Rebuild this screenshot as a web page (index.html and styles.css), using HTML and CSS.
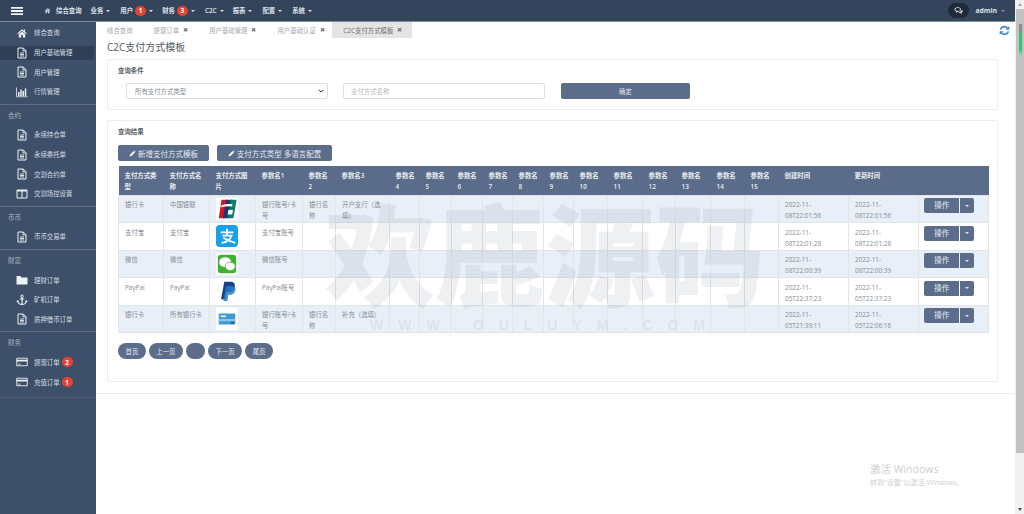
FILE: index.html
```html
<!DOCTYPE html>
<html lang="zh-CN">
<head>
<meta charset="utf-8">
<title>C2C支付方式模板</title>
<link rel="stylesheet" href="styles.css">
</head>
<body>
<svg class="defs" width="0" height="0" aria-hidden="true">
  <symbol id="i-home" viewBox="-2 -2 28 28"><path d="M12 3 0.8 13l1.700 2L12 6.800 21.500 15l1.700-2-4-3.600V4h-3v3z"/><path d="M4.500 15v7.500H10V16h4v6.500h5.500V15L12 8.600z"/></symbol>
  <symbol id="i-file" viewBox="0 0 24 24"><path d="M4 2h10.500L20 7.500V22H4z" fill="none" stroke="currentColor" stroke-width="2"/><path d="M14 2v6h6M8 12h8M8 15h8M8 18h8" fill="none" stroke="currentColor" stroke-width="1.800"/></symbol>
  <symbol id="i-chart" viewBox="0 0 24 24"><path d="M1 3v18.500h22" fill="none" stroke="currentColor" stroke-width="1.600"/><path d="M4 12h3v8H4zM8.500 7h3v13h-3zM13 10h3v10h-3zM17.500 5h3v15h-3z"/></symbol>
  <symbol id="i-cols" viewBox="0 0 24 24"><path d="M2 4h20v16H2zM12 4v16" fill="none" stroke="currentColor" stroke-width="2"/><path d="M2 4h20v3H2z"/></symbol>
  <symbol id="i-folder" viewBox="0 0 24 24"><path d="M1 4h8l2 3h12v14H1z"/></symbol>
  <symbol id="i-anchor" viewBox="0 0 24 24"><circle cx="12" cy="4.500" r="2.500" fill="none" stroke="currentColor" stroke-width="2"/><path d="M12 7v15M7.500 10h9M3.500 14c0 4.500 4.500 7 8.500 7s8.500-2.500 8.500-7" fill="none" stroke="currentColor" stroke-width="2.400"/><path d="M0.500 15.500 3.500 12l3 3.500zM17.500 15.500l3-3.500 3 3.500z"/></symbol>
  <symbol id="i-card" viewBox="0 0 24 24"><path d="M1.500 4.500h21v15h-21z" fill="none" stroke="currentColor" stroke-width="1.800"/><path d="M1.500 7.500h21v3.500h-21zM4 15.500h5v1.500H4z"/></symbol>
  <symbol id="i-pencil" viewBox="0 0 24 24"><path d="M2 22l1.500-6.500L15.500 3.500l5 5L8.500 20.500zM17 2l1.500-1 5 5-1 1.500z"/></symbol>
  <symbol id="i-chat" viewBox="0 0 24 24"><path d="M10 3c5 0 8.500 2.600 8.500 6s-3.500 6-8.500 6l-5 3 1-3.800C3.200 13.200 1.500 11.300 1.500 9 1.500 5.600 5 3 10 3zm0 2C6 5 3.500 6.800 3.500 9c0 1.500 1.200 2.900 3.200 3.700l-.4 1.500 2.500-1.300c.5.100 1.100.100 1.700.100 4 0 6.500-1.800 6.500-4S14 5 10 5z"/><path d="M21 9.500c1.200 1 2 2.300 2 3.800 0 1.800-1.200 3.300-3 4.200l1 3.500-4.600-2.800c-2 0-3.600-.4-4.900-1.200 5 .2 9.700-2.700 9.500-7.500z"/></symbol>
  <symbol id="i-refresh" viewBox="0 0 24 24"><path d="M3.500 10C4.500 6 8 3.500 12 3.500c2.700 0 5 1.100 6.600 2.900" fill="none" stroke="currentColor" stroke-width="3.400"/><path d="M22.500 2v8.500H14z"/><path d="M20.500 14c-1 4-4.500 6.500-8.500 6.500-2.700 0-5-1.100-6.600-2.900" fill="none" stroke="currentColor" stroke-width="3.400"/><path d="M1.500 22v-8.500H10z"/></symbol>
  <symbol id="p-union" viewBox="0 0 24 24"><rect width="24" height="24" fill="#fff"/><path d="M6 2h7L9.500 22H3z" fill="#d7141f"/><path d="M11 2h7l-3.500 20h-7z" fill="#163a74"/><path d="M16 2h6.500L19 22h-6.500z" fill="#0c7c6b"/><path d="M6 8c4-1.500 9-1.800 12-1.200l-.4 2.400c-3.500-.6-7.500-.2-12 1zM13.500 13h5l-.8 5h-5z" fill="#fff"/></symbol>
  <symbol id="p-ali" viewBox="0 0 24 24"><rect width="24" height="24" rx="4" fill="#1a9fe8"/><path d="M5 8h14M12 4v8M7 11.500h10c-1.500 4.500-5 7.500-11 8M8 14c3 2 7 4 13 5.500" fill="none" stroke="#fff" stroke-width="2"/></symbol>
  <symbol id="p-wx" viewBox="0 0 24 24"><rect width="24" height="24" fill="#fff"/><rect x="2" y="2" width="20" height="20" rx="3.500" fill="#41b035"/><ellipse cx="10" cy="10" rx="6.500" ry="5.500" fill="#fff"/><ellipse cx="15.500" cy="14.500" rx="5.500" ry="4.500" fill="#fff" stroke="#41b035" stroke-width=".8"/></symbol>
  <symbol id="p-pp" viewBox="0 0 24 24"><path d="M9 2h6.500c3.800 0 5.500 2 5 5.200-.6 4-3.300 6-7 6H11L9.800 21H5.500z" fill="#1b3f8f"/><path d="M11 6.500h6.500c2.800 0 4.100 1.500 3.700 4.200-.6 3.500-2.800 5.500-6 5.500h-1.700L12.300 23H8z" fill="#1e7cc4" opacity=".85"/></symbol>
  <symbol id="p-bank" viewBox="0 0 24 24"><rect width="24" height="24" rx="2" fill="#fff"/><rect x="3" y="6" width="18" height="12" rx="1" fill="#3d9ad9"/><path d="M3 12h18v2.500H3z" fill="#8bc6ec"/><path d="M5 8h6v2H5z" fill="#f0e9a0"/><path d="M16 15h4v2h-4z" fill="#1b5d96"/></symbol>
</svg>

<div class="app">
  <div class="main">
    <header class="topbar">
      <svg class="burger" viewBox="0 0 12 8" aria-hidden="true"><path d="M0 0h12v1.800H0zM0 3.100h12v1.800H0zM0 6.200h12V8H0z"/></svg>
      <nav class="topnav">
        <a class="tn tn-home"><svg class="ic-xs"><use href="#i-home"/></svg>综合查询</a>
        <a class="tn tn-a">业务<i class="caret"></i></a>
        <a class="tn tn-b">用户<b class="badge">1</b><i class="caret"></i></a>
        <a class="tn tn-b2">财务<b class="badge">3</b><i class="caret"></i></a>
        <a class="tn tn-c">C2C<i class="caret"></i></a>
        <a class="tn tn-d">报表<i class="caret"></i></a>
        <a class="tn tn-d">配置<i class="caret"></i></a>
        <a class="tn tn-d">系统<i class="caret"></i></a>
      </nav>
      <div class="topright">
        <span class="chat"><svg class="ic-chat"><use href="#i-chat"/></svg></span>
        <span class="admin">admin</span><i class="caret caret-dim"></i>
      </div>
    </header>
    <div class="body">
      <aside class="sidebar">
        <section class="sec sec-first">
          <a class="item"><svg class="ic"><use href="#i-home"/></svg>综合查询</a>
          <a class="item active"><svg class="ic"><use href="#i-file"/></svg>用户基础管理</a>
          <a class="item"><svg class="ic"><use href="#i-file"/></svg>用户管理</a>
          <a class="item"><svg class="ic"><use href="#i-chart"/></svg>行情管理</a>
        </section>
        <section class="sec">
          <h4>合约</h4>
          <a class="item"><svg class="ic"><use href="#i-file"/></svg>永续持仓单</a>
          <a class="item"><svg class="ic"><use href="#i-file"/></svg>永续委托单</a>
          <a class="item"><svg class="ic"><use href="#i-file"/></svg>交割合约单</a>
          <a class="item"><svg class="ic"><use href="#i-cols"/></svg>交割场控设置</a>
        </section>
        <section class="sec">
          <h4>币币</h4>
          <a class="item"><svg class="ic"><use href="#i-file"/></svg>币币交易单</a>
        </section>
        <section class="sec">
          <h4>财富</h4>
          <a class="item"><svg class="ic"><use href="#i-folder"/></svg>理财订单</a>
          <a class="item"><svg class="ic"><use href="#i-anchor"/></svg>矿机订单</a>
          <a class="item"><svg class="ic"><use href="#i-file"/></svg>质押借币订单</a>
        </section>
        <section class="sec">
          <h4>财务</h4>
          <a class="item"><svg class="ic"><use href="#i-card"/></svg>提现订单<b class="badge badge-side">2</b></a>
          <a class="item"><svg class="ic"><use href="#i-card"/></svg>充值订单<b class="badge badge-side">1</b></a>
        </section>
      </aside>
      <main class="content">
        <div class="tabs">
          <span class="tab tab-first">综合查询</span>
          <span class="tab">提现订单<b class="x">✖</b></span>
          <span class="tab">用户基础管理<b class="x">✖</b></span>
          <span class="tab">用户基础认证<b class="x">✖</b></span>
          <span class="tab tab-on">C2C支付方式模板<b class="x">✖</b></span>
          <svg class="refresh"><use href="#i-refresh"/></svg>
        </div>
        <div class="pad">
          <h1>C2C支付方式模板</h1>
          <div class="card card-q">
            <h5>查询条件</h5>
            <div class="form">
              <div class="select">所有支付方式类型<svg class="chev" viewBox="0 0 8 5" aria-hidden="true"><path d="M1 1l3 3 3-3" fill="none" stroke="#333" stroke-width="1.300"/></svg></div>
              <div class="input">支付方式名称</div>
              <button class="btn btn-ok">确定</button>
            </div>
          </div>
          <div class="card card-r">
            <h5>查询结果</h5>
            <div class="actions">
              <button class="btn btn-add"><svg class="ic-pen"><use href="#i-pencil"/></svg>新增支付方式模板</button>
              <button class="btn btn-lang"><svg class="ic-pen"><use href="#i-pencil"/></svg>支付方式类型 多语言配置</button>
            </div>
            <table class="grid">
              <colgroup>
                <col class="c45"><col class="c46"><col class="c46"><col class="c47"><col class="c33"><col class="c54"><col class="c30"><col class="c32"><col class="c31"><col class="c30"><col class="c31"><col class="c30"><col class="c34"><col class="c35"><col class="c33"><col class="c35"><col class="c34"><col class="c34"><col class="c70"><col class="c70"><col class="c70">
              </colgroup>
              <thead>
                <tr><th>支付方式类型</th><th>支付方式名称</th><th>支付方式图片</th><th>参数名1</th><th>参数名<br>2</th><th>参数名3</th><th>参数名<br>4</th><th>参数名<br>5</th><th>参数名<br>6</th><th>参数名<br>7</th><th>参数名<br>8</th><th>参数名<br>9</th><th>参数名<br>10</th><th>参数名<br>11</th><th>参数名<br>12</th><th>参数名<br>13</th><th>参数名<br>14</th><th>参数名<br>15</th><th>创建时间</th><th>更新时间</th><th></th></tr>
              </thead>
              <tbody>
                <tr><td>银行卡</td><td>中国银联</td><td><svg class="logo"><use href="#p-union"/></svg></td><td>银行账号/卡号</td><td>银行名称</td><td>开户支行（选填）</td><td></td><td></td><td></td><td></td><td></td><td></td><td></td><td></td><td></td><td></td><td></td><td></td><td>2022-11-08T22:01:56</td><td>2022-11-08T22:01:56</td><td><div class="split"><span class="sp-main">操作</span><span class="sp-drop"><i class="caret"></i></span></div></td></tr>
                <tr><td>支付宝</td><td>支付宝</td><td><svg class="logo"><use href="#p-ali"/></svg></td><td>支付宝账号</td><td></td><td></td><td></td><td></td><td></td><td></td><td></td><td></td><td></td><td></td><td></td><td></td><td></td><td></td><td>2022-11-08T22:01:28</td><td>2022-11-08T22:01:28</td><td><div class="split"><span class="sp-main">操作</span><span class="sp-drop"><i class="caret"></i></span></div></td></tr>
                <tr><td>微信</td><td>微信</td><td><svg class="logo"><use href="#p-wx"/></svg></td><td>微信账号</td><td></td><td></td><td></td><td></td><td></td><td></td><td></td><td></td><td></td><td></td><td></td><td></td><td></td><td></td><td>2022-11-08T22:00:39</td><td>2022-11-08T22:00:39</td><td><div class="split"><span class="sp-main">操作</span><span class="sp-drop"><i class="caret"></i></span></div></td></tr>
                <tr><td>PayPal</td><td>PayPal</td><td><svg class="logo"><use href="#p-pp"/></svg></td><td>PayPal账号</td><td></td><td></td><td></td><td></td><td></td><td></td><td></td><td></td><td></td><td></td><td></td><td></td><td></td><td></td><td>2022-11-05T22:37:23</td><td>2022-11-05T22:37:23</td><td><div class="split"><span class="sp-main">操作</span><span class="sp-drop"><i class="caret"></i></span></div></td></tr>
                <tr><td>银行卡</td><td>所有银行卡</td><td><svg class="logo"><use href="#p-bank"/></svg></td><td>银行账号/卡号</td><td>银行名称</td><td>补充（选填）</td><td></td><td></td><td></td><td></td><td></td><td></td><td></td><td></td><td></td><td></td><td></td><td></td><td>2022-11-05T21:39:11</td><td>2022-11-05T22:06:16</td><td><div class="split"><span class="sp-main">操作</span><span class="sp-drop"><i class="caret"></i></span></div></td></tr>
              </tbody>
            </table>
            <div class="pager">
              <a class="pg">首页</a><a class="pg">上一页</a><a class="pg pg-cur">1</a><a class="pg">下一页</a><a class="pg">尾页</a>
            </div>
          </div>
          <div class="rule"></div>
        </div>
      </main>
    </div>
  </div>
  <div class="scroll">
    <i class="arrow-up"></i>
    <div class="thumb"><span class="mini"></span></div>
    <i class="arrow-down"></i>
  </div>
</div>

<div class="wm" aria-hidden="true">
  <div class="wm-big">欢鹿源码</div>
  <div class="wm-url">WWW.OULUYM.COM</div>
</div>
<div class="activate">
  <div class="act-1">激活 Windows</div>
  <div class="act-2">转到"设置"以激活 Windows。</div>
</div>
</body>
</html>
```
FILE: styles.css
```css
* { box-sizing: border-box; }
html, body { margin: 0; height: 514px; overflow: hidden; }
body {
  font-family: "Open Sans", "Noto Sans CJK SC", sans-serif;
  font-size: 6.4px;
  color: #808791;
  background: #fff;
  position: relative;
}
.defs { position: absolute; }
svg { fill: currentColor; }
a { display: block; }

.app { display: flex; height: 514px; }
.main { flex: 1; min-width: 0; display: flex; flex-direction: column; }

/* top bar */
.topbar {
  height: 22px;
  flex: none;
  background: #34445c;
  border-bottom: 1px solid #7f8da0;
  color: #dfe4ea;
  display: flex;
  align-items: center;
  padding-left: 11px;
  font-weight: 600;
}
.burger { width: 12px; height: 8px; fill: #f2f4f6; flex: none; }
.topnav { display: flex; align-items: center; margin-left: 21px; }
.tn { display: flex; align-items: center; white-space: nowrap; }
.tn-home { margin-right: 9px; }
.tn-a { margin-right: 10px; }
.tn-b { margin-right: 9px; }
.tn-b2 { margin-right: 10px; }
.tn-c { margin-right: 9px; }
.tn-d { margin-right: 10px; }
.ic-xs { width: 7px; height: 7px; margin-right: 5px; }
.caret {
  display: inline-block;
  width: 0;
  height: 0;
  margin-left: 3px;
  border-left: 2px solid transparent;
  border-right: 2px solid transparent;
  border-top: 2.500px solid currentColor;
}
.badge {
  display: inline-flex;
  align-items: center;
  justify-content: center;
  width: 11px;
  height: 10px;
  margin-left: 2px;
  border-radius: 5px;
  background: #e4442f;
  color: #fff;
  font-weight: 700;
  font-size: 6.400px;
}
.topright { margin-left: auto; display: flex; align-items: center; padding-right: 10px; }
.chat {
  width: 21px;
  height: 15px;
  border-radius: 8px;
  background: #1f2b3a;
  display: flex;
  align-items: center;
  justify-content: center;
  margin-right: 6px;
}
.ic-chat { width: 9px; height: 9px; color: #f0f2f5; }
.admin { font-weight: 700; font-size: 6.800px; }
.caret-dim { margin-left: 4px; color: #8d99a9; }

.body { flex: 1; display: flex; min-height: 0; }

/* sidebar */
.sidebar { width: 96px; flex: none; background: #3e5069; color: #d9dfe6; }
.sec { border-bottom: 1px solid #5b6b81; padding-bottom: 2px; }
.sec-first { padding-top: 1.200px; }
.sec h4 {
  margin: 0;
  height: 20.600px;
  padding: 1px 0 0 8px;
  display: flex;
  align-items: center;
  font-size: 6.400px;
  font-weight: 400;
  color: #aeb8c4;
}
.sec:last-child { padding-bottom: 5px; border-bottom-color: #4a5b73; }
.item {
  height: 19.600px;
  margin-right: 2px;
  padding-left: 16px;
  display: flex;
  align-items: center;
  white-space: nowrap;
}
.item.active { background: #2f3f55; height: 14px; margin: 2.800px 2px 2.800px 0; }
.ic { width: 12px; height: 12px; margin-right: 6px; flex: none; color: #eef1f4; }
.badge-side { margin-left: 2px; }

/* content */
.content { flex: 1; min-width: 0; position: relative; }
.tabs { height: 16px; display: flex; align-items: stretch; padding-left: 11px; color: #a2a8b0; }
.tab { display: flex; align-items: center; margin-right: 21px; white-space: nowrap; }
.tab-on { background: #e4e4e4; color: #6b6f75; padding: 0 10px 0 11px; margin: 0 0 0 -13.500px; width: 80px; }
.x { font-size: 6px; margin-left: 4px; color: #71767d; font-weight: 400; }
.refresh {
  width: 11px;
  height: 11px;
  color: #3d85da;
  margin: 3px 5px 0 auto;
}
.pad { padding: 0 17px 0 11px; }
h1 {
  margin: 0;
  height: 21px;
  padding-bottom: 5px;
  display: flex;
  align-items: center;
  font-size: 10px;
  font-weight: 400;
  color: #555a61;
}
.card { border: 1px solid #ededed; border-radius: 2px; padding: 0 0 0 10px; }
h5 {
  margin: 0;
  font-size: 6.400px;
  font-weight: 700;
  color: #5c6168;
  line-height: 11px;
}
.card-q { height: 51px; padding-top: 4.500px; }
.form { display: flex; margin-top: 7.500px; padding-left: 8px; }
.select, .input {
  height: 16px;
  width: 202px;
  border: 1px solid #dedede;
  border-radius: 2px;
  background: #fff;
  display: flex;
  align-items: center;
  padding-left: 8px;
  color: #888d94;
}
.chev { width: 6px; height: 4px; margin-left: auto; margin-right: 3px; }
.input { margin-left: 15px; color: #b3b7bc; padding-left: 7px; }
.btn {
  border: 0;
  border-radius: 2px;
  background: #5b6d8b;
  color: #e6eaef;
  font: inherit;
  font-size: 6.400px;
  padding: 0;
  display: flex;
  align-items: center;
  justify-content: center;
  height: 16px;
}
.btn-ok { width: 129px; margin-left: 16px; }
.card-r { height: 262px; margin-top: 10px; padding-top: 4.500px; }
.actions { display: flex; gap: 8px; margin-top: 8.500px; }
.btn-add { width: 91px; font-size: 7.500px; }
.btn-lang { width: 115px; font-size: 7.500px; }
.ic-pen { width: 7px; height: 7px; margin-right: 2px; color: #f2f4f6; }

/* table */
.grid {
  table-layout: fixed;
  width: 870px;
  border-collapse: collapse;
  margin-top: 5px;
}
.c30 { width: 30px; } .c31 { width: 31px; } .c32 { width: 32px; } .c33 { width: 33px; }
.c34 { width: 34px; } .c35 { width: 35px; } .c45 { width: 45px; } .c46 { width: 46px; }
.c47 { width: 47px; } .c54 { width: 54px; } .c70 { width: 70px; }
.grid th {
  background: #5a6c8a;
  color: #e8ecf1;
  font-weight: 600;
  text-align: left;
  vertical-align: top;
  padding: 3.500px 0 3px 6px;
  line-height: 11px;
  height: 28px;
}
.grid th:nth-child(-n+3) { padding-right: 5px; }
.grid td {
  height: 27.600px;
  padding: 3.500px 3px 0 6px;
  line-height: 11px;
  vertical-align: top;
  border: 1px solid #e1e5ea;
  color: #878c93;
  overflow-wrap: anywhere;
}
.grid tbody tr:nth-child(odd) td { background: #e9eff7; }
.grid td:has(.logo) { padding: 2px 0 0 6px; }
.grid td:has(.split) { padding: 2.500px 0 0 5px; }
.logo { width: 22px; height: 22px; display: block; }
.split { display: flex; width: 50px; height: 15px; color: #e6eaef; font-size: 7.500px; }
.sp-main {
  width: 36px;
  background: #5b6d8b;
  border-radius: 2px 0 0 2px;
  display: flex;
  align-items: center;
  justify-content: center;
}
.sp-drop {
  width: 14px;
  margin-left: 1px;
  background: #5b6d8b;
  border-radius: 0 2px 2px 0;
  display: flex;
  align-items: center;
  justify-content: center;
}
.sp-drop .caret { margin: 0; }

/* pager */
.pager { display: flex; gap: 3px; margin-top: 10px; }
.pg {
  height: 16px;
  padding: 0 7.500px;
  border-radius: 8px;
  background: #5b6d8b;
  color: #e6eaef;
  display: flex;
  align-items: center;
  justify-content: center;
}
.pg-cur { color: #a0475e; width: 19px; padding: 0; }
.rule { height: 1px; background: #ebebeb; margin: 11px -17px 0 -11px; }

/* scrollbar */
.scroll {
  width: 9px;
  flex: none;
  background: #f1f1f1;
  display: flex;
  flex-direction: column;
  align-items: center;
  position: relative;
}
.arrow-up, .arrow-down { width: 0; height: 0; position: absolute; border: 2px solid transparent; left: 2.500px; }
.arrow-up { top: 1px; border-bottom: 3px solid #a3a3a3; }
.arrow-down { bottom: 1px; border-top: 3px solid #505050; }
.thumb { margin-top: 9px; width: 8px; height: 444px; margin-left: 1px; background: #c1c1c1; position: relative; }
.mini {
  position: absolute;
  left: 3px;
  top: 15px;
  width: 3px;
  height: 32px;
  background: linear-gradient(#8e8e8e 20%, #35c46c 30%, #35c46c 80%, #a9d8ba);
}

/* overlays */
.wm {
  position: absolute;
  left: 300px;
  top: 185px;
  width: 490px;
  text-align: center;
  pointer-events: none;
  color: rgba(90, 105, 130, .1);
  font-family: "Noto Sans CJK SC", sans-serif;
}
.wm-big { font-size: 110px; font-weight: 900; line-height: 130px; white-space: nowrap; }
.wm-url { font-family: "Liberation Sans", sans-serif; font-size: 14px; letter-spacing: 15px; font-weight: 700; margin-top: 2px; }
.activate { position: absolute; left: 870px; top: 462px; color: #cfcfcf; white-space: nowrap; }
.act-1 { font-size: 10.500px; line-height: 14px; }
.act-2 { font-size: 7px; line-height: 12px; margin-top: 1px; }
```
